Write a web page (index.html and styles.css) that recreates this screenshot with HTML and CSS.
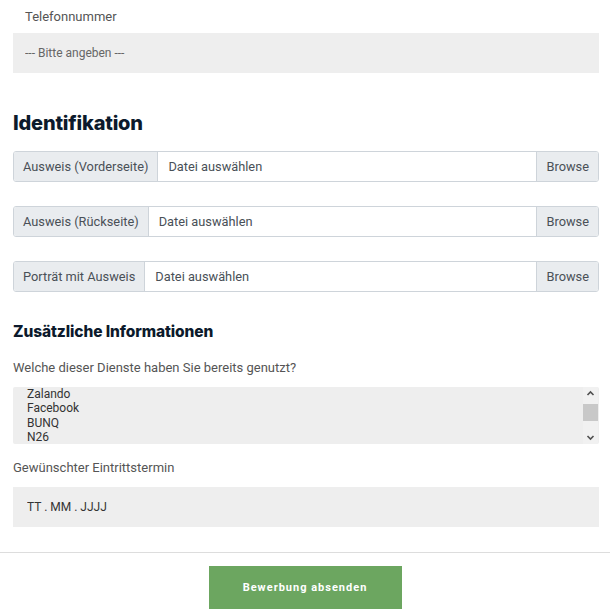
FILE: index.html
```html
<!DOCTYPE html>
<html lang="de">
<head>
   <meta charset="UTF-8">
   <meta name="viewport" content="width=device-width, initial-scale=1.0">
   <title>Bewerbung</title>
   <link rel="stylesheet" href="styles.css">
</head>
<body>
   <form class="form-wrap">
       <div class="field">
           <label class="field-label field-label-indent">Telefonnummer</label>
           <input class="text-input" type="text" placeholder="--- Bitte angeben ---">
       </div>

       <h2 class="section-title">Identifikation</h2>

       <div class="file-group">
           <span class="file-prepend">Ausweis (Vorderseite)</span>
           <span class="file-name">Datei auswählen</span>
           <span class="file-browse">Browse</span>
       </div>
       <div class="file-group">
           <span class="file-prepend">Ausweis (Rückseite)</span>
           <span class="file-name">Datei auswählen</span>
           <span class="file-browse">Browse</span>
       </div>
       <div class="file-group">
           <span class="file-prepend">Porträt mit Ausweis</span>
           <span class="file-name">Datei auswählen</span>
           <span class="file-browse">Browse</span>
       </div>

       <h3 class="sub-title">Zusätzliche Informationen</h3>

       <div class="field">
           <label class="field-label">Welche dieser Dienste haben Sie bereits genutzt?</label>
           <div class="select-wrap">
               <select class="multi-select" multiple>
                   <option>Zalando</option>
                   <option>Facebook</option>
                   <option>BUNQ</option>
                   <option>N26</option>
                   <option>Amazon</option>
                   <option>PayPal</option>
                   <option>eBay</option>
                   <option>Sonstige</option>
               </select>
               <div class="fake-scrollbar">
                   <svg class="scroll-arrow" width="15" height="13" viewBox="0 0 15 13">
                       <path d="M4.5 8 L7.5 5 L10.5 8" fill="none" stroke="#505050" stroke-width="1.6"/>
                   </svg>
                   <div class="scroll-track"><div class="scroll-thumb"></div></div>
                   <svg class="scroll-arrow" width="15" height="13" viewBox="0 0 15 13">
                       <path d="M4.5 5 L7.5 8 L10.5 5" fill="none" stroke="#505050" stroke-width="1.6"/>
                   </svg>
               </div>
           </div>
       </div>

       <div class="field">
           <label class="field-label">Gewünschter Eintrittstermin</label>
           <input class="text-input date-input" type="text" value="TT . MM . JJJJ">
       </div>
   </form>

   <div class="form-footer">
       <button class="submit-btn" type="button">Bewerbung absenden</button>
   </div>
</body>
</html>
```

FILE: styles.css
```css
body {
    margin: 0;
    font-family: Roboto, "Liberation Sans", Arial, sans-serif;
    background: #fff;
    color: #333;
}
.form-wrap {
    padding: 7px 11px 0 13px;
}
.field {
    margin-bottom: 14px;
}
.field-label {
    display: block;
    font-size: 13px;
    line-height: 20px;
    color: #555;
    margin-bottom: 9px;
}
.field-label-indent {
    padding-left: 12px;
    margin-bottom: 6px;
}
.text-input {
    display: block;
    box-sizing: border-box;
    width: 100%;
    height: 40px;
    border: none;
    background: #eeeeee;
    padding: 0 12px;
    font-family: inherit;
    font-size: 12px;
    color: #333;
}
.text-input::placeholder {
    color: #666;
}
.date-input {
    padding-left: 14px;
}
.section-title {
    font-family: Inter, Lato, sans-serif;
    font-weight: 800;
    font-size: 20px;
    line-height: 26px;
    letter-spacing: -0.2px;
    font-variant-ligatures: none;
    color: #0c1a2c;
    margin: 37px 0 15px;
}
.sub-title {
    font-family: Inter, Lato, sans-serif;
    font-weight: 800;
    font-size: 15.5px;
    line-height: 20px;
    letter-spacing: -0.1px;
    color: #0c1a2c;
    margin: 30px 0 16px;
}
.file-group {
    display: flex;
    height: 31px;
    box-sizing: border-box;
    border: 1px solid #ced4da;
    border-radius: 3px;
    font-size: 12.8px;
    color: #495057;
    margin-bottom: 24px;
    overflow: hidden;
}
.file-prepend {
    display: flex;
    align-items: center;
    padding: 0 9px;
    background: #e9ecef;
    border-right: 1px solid #ced4da;
}
.file-name {
    flex: 1;
    display: flex;
    align-items: center;
    padding: 0 10px;
}
.file-browse {
    display: flex;
    align-items: center;
    padding: 0 9px 0 10px;
    background: #e9ecef;
    border-left: 1px solid #ced4da;
}
.select-wrap {
    position: relative;
}
.multi-select {
    display: block;
    box-sizing: border-box;
    width: 100%;
    height: 57px;
    border: none;
    background: #eeeeee;
    padding: 0 0 0 10px;
    font-family: inherit;
    font-size: 12px;
    color: #333;
    outline: none;
    overflow: hidden;
    scrollbar-width: none;
}
.multi-select option {
    padding: 0 4px;
    line-height: 14px;
}
.fake-scrollbar {
    position: absolute;
    top: 0;
    right: 1px;
    bottom: 0;
    width: 15px;
    background: #f1f1f1;
    display: flex;
    flex-direction: column;
}
.scroll-arrow {
    display: block;
    flex: none;
}
.scroll-track {
    flex: 1;
    padding-top: 4px;
}
.scroll-thumb {
    height: 17px;
    background: #c8c8c8;
}
.form-footer {
    margin-top: 25px;
    border-top: 1px solid #dddddd;
    padding-top: 13px;
    text-align: center;
}
.submit-btn {
    width: 193px;
    height: 43px;
    border: none;
    background: #6ca660;
    color: #fff;
    font-family: Roboto, sans-serif;
    font-weight: 700;
    font-size: 11px;
    letter-spacing: 1px;
    cursor: pointer;
}
```
